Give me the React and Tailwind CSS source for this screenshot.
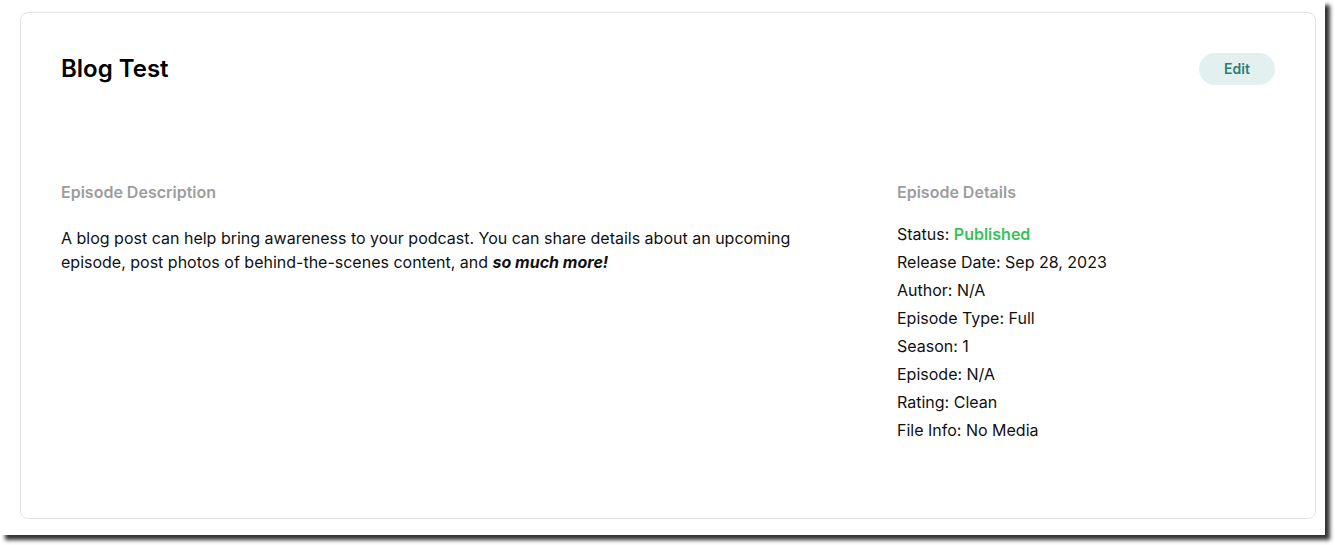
import React from 'react';

const details = [
  { label: 'Status', value: 'Published', highlight: true },
  { label: 'Release Date', value: 'Sep 28, 2023' },
  { label: 'Author', value: 'N/A' },
  { label: 'Episode Type', value: 'Full' },
  { label: 'Season', value: '1' },
  { label: 'Episode', value: 'N/A' },
  { label: 'Rating', value: 'Clean' },
  { label: 'File Info', value: 'No Media' },
];

const App = () => {
  return (
    <div className="w-[1335px] h-[545px] bg-white">
      <div className="w-[1325px] h-[535px] bg-white shadow-[5px_5px_4px_rgba(0,0,0,0.8)] pt-[12px] pl-[20px] font-['Inter',sans-serif] text-[#111]">
        <div className="w-[1296px] h-[507px] rounded-lg border border-[#e3e3e3] bg-white px-10 pt-10">
          {/* header */}
          <div className="flex items-center justify-between h-8">
            <h1 className="text-2xl font-semibold text-black">Blog Test</h1>
            <button className="h-8 w-[76px] rounded-full bg-[#e2f1ef] text-sm font-semibold text-[#2b7d77]">
              Edit
            </button>
          </div>

          <div className="flex mt-[95px]">
            <div className="flex-1">
              <h2 className="text-base leading-6 font-semibold text-[#9d9d9d]">Episode Description</h2>
              <p className="mt-[22px] max-w-[760px] text-base leading-6 text-[#111]">
                A blog post can help bring awareness to your podcast. You can share details about an upcoming
                episode, post photos of behind-the-scenes content, and{' '}
                <strong className="italic font-bold">so much more!</strong>
              </p>
            </div>
            <div className="w-[378px]">
              <h2 className="text-base leading-6 font-semibold text-[#9d9d9d]">Episode Details</h2>
              <ul className="mt-4">
                {details.map((d) => (
                  <li key={d.label} className="text-base leading-7">
                    {d.label}:{' '}
                    <span className={d.highlight ? 'font-semibold text-[#34c35b]' : ''}>{d.value}</span>
                  </li>
                ))}
              </ul>
            </div>
          </div>
        </div>
      </div>
    </div>
  );
};

export default App;
